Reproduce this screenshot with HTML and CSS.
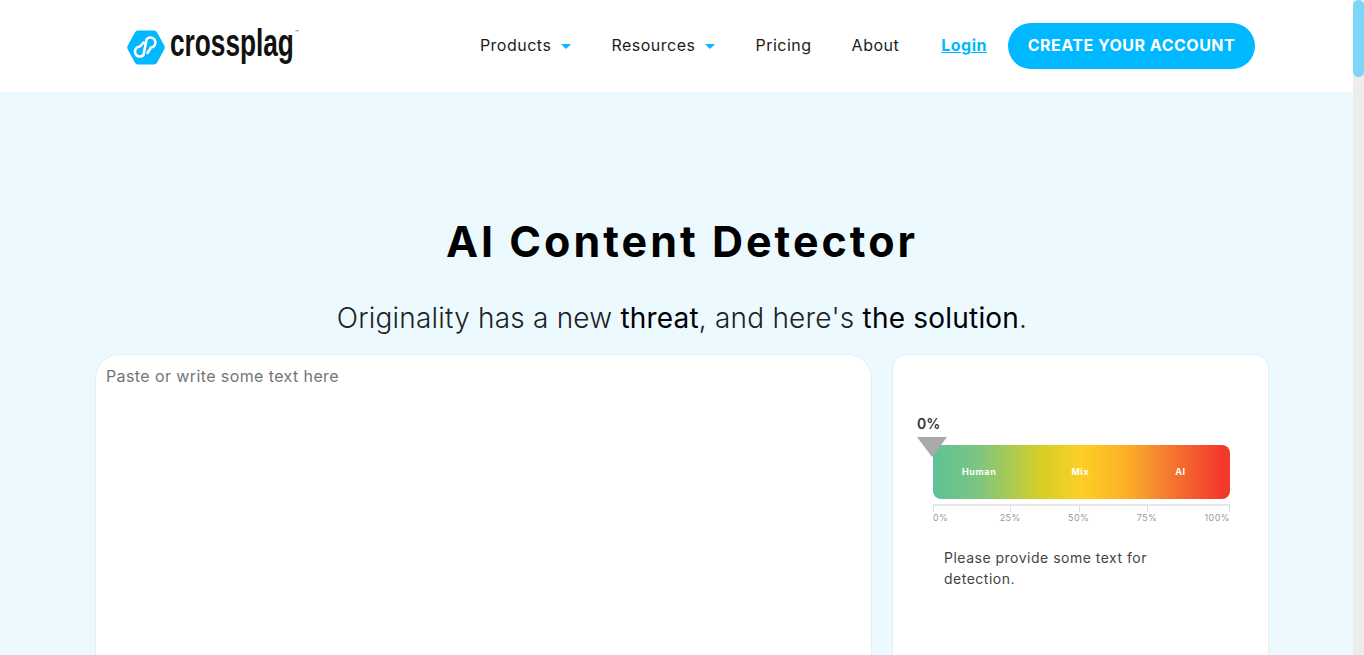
FILE: index.html
```html
<!DOCTYPE html>
<html lang="en">
<head>
  <meta charset="UTF-8">
  <title>AI Content Detector - Crossplag</title>
  <meta name="viewport" content="width=device-width, initial-scale=1">
  <link rel="stylesheet" href="styles.css">
</head>
<body>
  <header class="header">
    <a class="logo" href="#">
      <svg class="logo-mark" viewBox="0 0 38 35" width="38" height="35">
        <path d="M11 .5h16a3.500 3.500 0 0 1 3 1.700l7.200 13.300a4 4 0 0 1 0 4L30 32.800a3.500 3.500 0 0 1-3 1.700H11a3.500 3.500 0 0 1-3-1.700L.8 19.500a4 4 0 0 1 0-4L8 2.200A3.500 3.500 0 0 1 11 .5z" fill="#00b8ff"/>
        <path d="M20.500 23l3.500-5.500A5 5 0 1 0 19.500 9.500L16.500 25A5 5 0 1 1 13 16.500l3.500-4" fill="none" stroke="#fff" stroke-width="2.600" stroke-linecap="round" stroke-linejoin="round"/>
      </svg>
      <span class="logo-text">crossplag</span><span class="logo-tm">™</span>
    </a>
    <nav class="nav">
      <a class="nav-link" href="#">Products <span class="caret"></span></a>
      <a class="nav-link" href="#">Resources <span class="caret"></span></a>
      <a class="nav-link" href="#">Pricing</a>
      <a class="nav-link" href="#">About</a>
      <a class="nav-link login" href="#">Login</a>
      <a class="btn" href="#">CREATE YOUR ACCOUNT</a>
    </nav>
  </header>

  <main class="hero">
    <h1>AI Content Detector</h1>
    <p class="subtitle">Originality has a new <span>threat</span>, and here's <span>the solution</span>.</p>

    <div class="panels">
      <div class="panel panel-text">
        <p class="placeholder">Paste or write some text here</p>
      </div>
      <div class="panel panel-result">
        <div class="score">0%</div>
        <div class="pointer"></div>
        <div class="meter">
          <span>Human</span>
          <span>Mix</span>
          <span>AI</span>
        </div>
        <div class="ruler">
          <span>0%</span>
          <span>25%</span>
          <span>50%</span>
          <span>75%</span>
          <span>100%</span>
        </div>
        <p class="message">Please provide some text for detection.</p>
      </div>
    </div>
  </main>

  <div class="scrollbar"><div class="scrollbar-thumb"></div></div>
</body>
</html>
```

FILE: styles.css
```css
html, body {
  height: 100%;
  margin: 0;
  overflow: hidden;
}

body {
  font-family: Inter, "Open Sans", sans-serif;
  background: #ecfaff;
  color: #000;
}

a {
  text-decoration: none;
  color: inherit;
}

.header {
  height: 92px;
  background: #fff;
  display: flex;
  align-items: center;
  justify-content: space-between;
  padding: 0 109px 0 127px;
}

.logo {
  display: flex;
  align-items: center;
  gap: 5px;
  margin-top: 2px;
}

.logo-text {
  font-family: "Liberation Sans", sans-serif;
  font-weight: 700;
  font-size: 38px;
  line-height: 40px;
  color: #111;
  display: inline-block;
  width: 123px;
  white-space: nowrap;
  transform: scaleX(0.69);
  transform-origin: left center;
  margin-top: -9px;
}

.logo-tm {
  font-size: 6px;
  color: #333;
  margin: -30px 0 0 -3px;
}

.nav {
  display: flex;
  align-items: center;
  font-size: 16px;
  letter-spacing: 0.5px;
  color: #1c1c1c;
}

.nav-link {
  margin-right: 40px;
  padding-bottom: 2px;
}

.caret {
  display: inline-block;
  width: 0;
  height: 0;
  margin-left: 5px;
  vertical-align: 2px;
  border-left: 5.5px solid transparent;
  border-right: 5.5px solid transparent;
  border-top: 5.5px solid #00b8ff;
}

.login {
  margin-left: 2px;
  margin-right: 21px;
  color: #00b8ff;
  font-weight: 700;
  text-decoration: underline;
}

.btn {
  background: #00b8ff;
  color: #fff;
  font-weight: 700;
  box-sizing: border-box;
  height: 46px;
  width: 247px;
  padding-bottom: 2px;
  border-radius: 23px;
  display: flex;
  align-items: center;
  justify-content: center;
}

.hero {
  padding-top: 120px;
  text-align: center;
}

h1 {
  font-size: 43px;
  line-height: 58px;
  font-weight: 700;
  letter-spacing: 3px;
  margin: 0;
}

.subtitle {
  font-size: 28px;
  line-height: 36px;
  font-weight: 300;
  letter-spacing: 0.2px;
  margin: 30px 0 18px;
  color: #222;
}

.subtitle span {
  font-weight: 400;
  color: #000;
}

.panels {
  display: flex;
  gap: 20px;
  padding: 0 95px;
  text-align: left;
}

.panel {
  background: #fff;
  border: 1px solid #e3eef2;
  height: 500px;
  box-sizing: border-box;
}

.panel-text {
  width: 777px;
  border-radius: 24px;
  padding: 11px 10px;
}

.placeholder {
  margin: 0;
  font-size: 16px;
  line-height: 20px;
  letter-spacing: 0.4px;
  color: #757575;
}

.panel-result {
  width: 377px;
  border-radius: 14px;
  padding: 60px 38px 0 24px;
}

.score {
  font-size: 14px;
  font-weight: 600;
  line-height: 18px;
  color: #333;
}

.pointer {
  width: 0;
  height: 0;
  margin-top: 4px;
  border-left: 15px solid transparent;
  border-right: 15px solid transparent;
  border-top: 20px solid #a9a9a9;
  position: relative;
  z-index: 1;
}

.meter {
  margin: -12px 0 0 16px;
  box-sizing: border-box;
  height: 54px;
  padding-bottom: 2px;
  border-radius: 8px;
  background: linear-gradient(90deg, #5fc295 0%, #7cc582 15%, #d4cf28 36%, #fccf25 50%, #fcb027 65%, #f58a2f 75%, #f3392c 97%);
  display: flex;
  align-items: center;
  color: #fff;
  font-size: 9px;
  font-weight: 700;
  letter-spacing: 0.6px;
}

.meter span:nth-child(1) { margin-left: 29px; }
.meter span:nth-child(2) { margin-left: 75px; }
.meter span:nth-child(3) { margin-left: 86px; }

.ruler {
  margin: 5px 0 0 16px;
  border-top: 2px solid #e6e6e6;
  display: flex;
  justify-content: space-between;
  font-size: 9px;
  line-height: 12px;
  letter-spacing: 0.4px;
  padding-top: 6px;
  color: #999;
}

.ruler span {
  position: relative;
}

.ruler span:first-child {
  padding-right: 4px;
}

.ruler span::before {
  content: "";
  position: absolute;
  top: -6px;
  left: 50%;
  width: 1px;
  height: 6px;
  background: #ddd;
}

.ruler span:first-child::before {
  left: 0;
}

.ruler span:last-child::before {
  left: auto;
  right: 0;
}

.message {
  margin: 23px 0 0 27px;
  font-size: 14px;
  line-height: 21px;
  letter-spacing: 0.5px;
  width: 230px;
  color: #444;
}

.scrollbar {
  position: fixed;
  top: 0;
  right: 0;
  bottom: 0;
  width: 11px;
  background: #ededed;
}

.scrollbar-thumb {
  height: 77px;
  background: #7bd6f9;
  border-radius: 6px;
}
```
